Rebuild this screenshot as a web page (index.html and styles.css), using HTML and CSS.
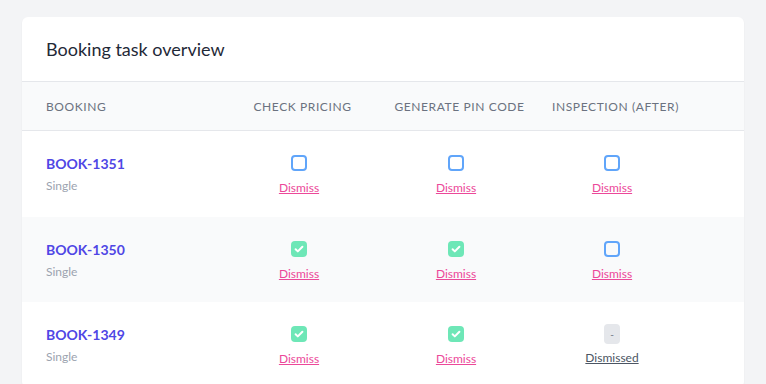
FILE: index.html
```html
<!DOCTYPE html>
<html lang="en">
<head>
<meta charset="utf-8">
<title>Booking task overview</title>
<link rel="stylesheet" href="styles.css">
</head>
<body>
<div class="page">
  <section class="card">
    <header class="card-head">
      <h2 class="card-title">Booking task overview</h2>
    </header>
    <div class="table">
      <div class="row head">
        <div class="th th-first">Booking</div>
        <div class="th">Check pricing</div>
        <div class="th">Generate pin code</div>
        <div class="th">Inspection (after)</div>
        <div class="th"></div>
      </div>

      <div class="row">
        <div class="cell first">
          <a class="ref">BOOK-1351</a>
          <span class="type">Single</span>
        </div>
        <div class="cell task">
          <span class="box"></span>
          <a class="dismiss">Dismiss</a>
        </div>
        <div class="cell task">
          <span class="box"></span>
          <a class="dismiss">Dismiss</a>
        </div>
        <div class="cell task">
          <span class="box"></span>
          <a class="dismiss">Dismiss</a>
        </div>
        <div class="cell"></div>
      </div>

      <div class="row alt">
        <div class="cell first">
          <a class="ref">BOOK-1350</a>
          <span class="type">Single</span>
        </div>
        <div class="cell task">
          <span class="box done"><svg viewBox="0 0 16 16" width="16" height="16"><path d="M4.6 8.3l2.2 2.1 4.6-4.7" fill="none" stroke="#fff" stroke-width="2" stroke-linecap="round" stroke-linejoin="round"/></svg></span>
          <a class="dismiss">Dismiss</a>
        </div>
        <div class="cell task">
          <span class="box done"><svg viewBox="0 0 16 16" width="16" height="16"><path d="M4.6 8.3l2.2 2.1 4.6-4.7" fill="none" stroke="#fff" stroke-width="2" stroke-linecap="round" stroke-linejoin="round"/></svg></span>
          <a class="dismiss">Dismiss</a>
        </div>
        <div class="cell task">
          <span class="box"></span>
          <a class="dismiss">Dismiss</a>
        </div>
        <div class="cell"></div>
      </div>

      <div class="row">
        <div class="cell first">
          <a class="ref">BOOK-1349</a>
          <span class="type">Single</span>
        </div>
        <div class="cell task">
          <span class="box done"><svg viewBox="0 0 16 16" width="16" height="16"><path d="M4.6 8.3l2.2 2.1 4.6-4.7" fill="none" stroke="#fff" stroke-width="2" stroke-linecap="round" stroke-linejoin="round"/></svg></span>
          <a class="dismiss">Dismiss</a>
        </div>
        <div class="cell task">
          <span class="box done"><svg viewBox="0 0 16 16" width="16" height="16"><path d="M4.6 8.3l2.2 2.1 4.6-4.7" fill="none" stroke="#fff" stroke-width="2" stroke-linecap="round" stroke-linejoin="round"/></svg></span>
          <a class="dismiss">Dismiss</a>
        </div>
        <div class="cell task">
          <span class="box skipped">-</span>
          <a class="dismiss dismissed">Dismissed</a>
        </div>
        <div class="cell"></div>
      </div>
    </div>
  </section>
</div>
</body>
</html>
```

FILE: styles.css
```css
* { box-sizing: border-box; }

html, body {
  margin: 0;
  padding: 0;
  background: #f3f4f6;
  font-family: Lato, "Noto Sans", "Liberation Sans", sans-serif;
  color: #111827;
}

.page {
  padding: 17px 22px 0 22px;
}

.card {
  background: #fff;
  border-radius: 6px;
  box-shadow: 0 1px 2px rgba(0, 0, 0, 0.06);
  overflow: hidden;
}

.card-head {
  height: 65px;
  padding: 0 24px;
  display: flex;
  align-items: center;
  border-bottom: 1px solid #e5e7eb;
}

.card-title {
  margin: 0;
  font-size: 18px;
  font-weight: 400;
  color: #1f2937;
}

.row {
  display: grid;
  grid-template-columns: 202px 150px 164px 148px 1fr;
}

.row.head {
  height: 49px;
  background: #f9fafb;
  border-bottom: 1px solid #e5e7eb;
  align-items: center;
}

.th {
  font-size: 12px;
  letter-spacing: 0.05em;
  text-transform: uppercase;
  color: #6b7280;
  text-align: center;
  padding-left: 7px;
}

.th-first {
  text-align: left;
  padding-left: 24px;
}

.row:not(.head) {
  height: 85.5px;
}

.row.alt {
  background: #f9fafb;
}

.cell {
  display: flex;
  flex-direction: column;
  padding-top: 23px;
}

.cell.first {
  padding-left: 24px;
}

.cell.task {
  align-items: center;
}

.ref {
  font-size: 14px;
  font-weight: 700;
  color: #4f46e5;
  line-height: 20px;
}

.type {
  margin-top: 4px;
  font-size: 12px;
  color: #9ca3af;
  line-height: 16px;
}

.box {
  width: 16px;
  height: 16px;
  margin-top: 1px;
  border: 2px solid #60a5fa;
  border-radius: 4px;
  display: block;
}

.box.done {
  border: none;
  background: #6ee7b7;
}

.box.done svg { display: block; }

.box.skipped {
  border: none;
  background: #e5e7eb;
  height: 20px;
  margin-top: -1px;
  font-size: 10px;
  color: #6b7280;
  text-align: center;
  line-height: 20px;
}

.dismiss {
  margin-top: 9px;
  font-size: 12px;
  line-height: 16px;
  color: #ec4899;
  text-decoration: underline;
}

.skipped + .dismiss {
  margin-top: 6px;
}

.dismiss.dismissed {
  color: #4b5563;
}
```
